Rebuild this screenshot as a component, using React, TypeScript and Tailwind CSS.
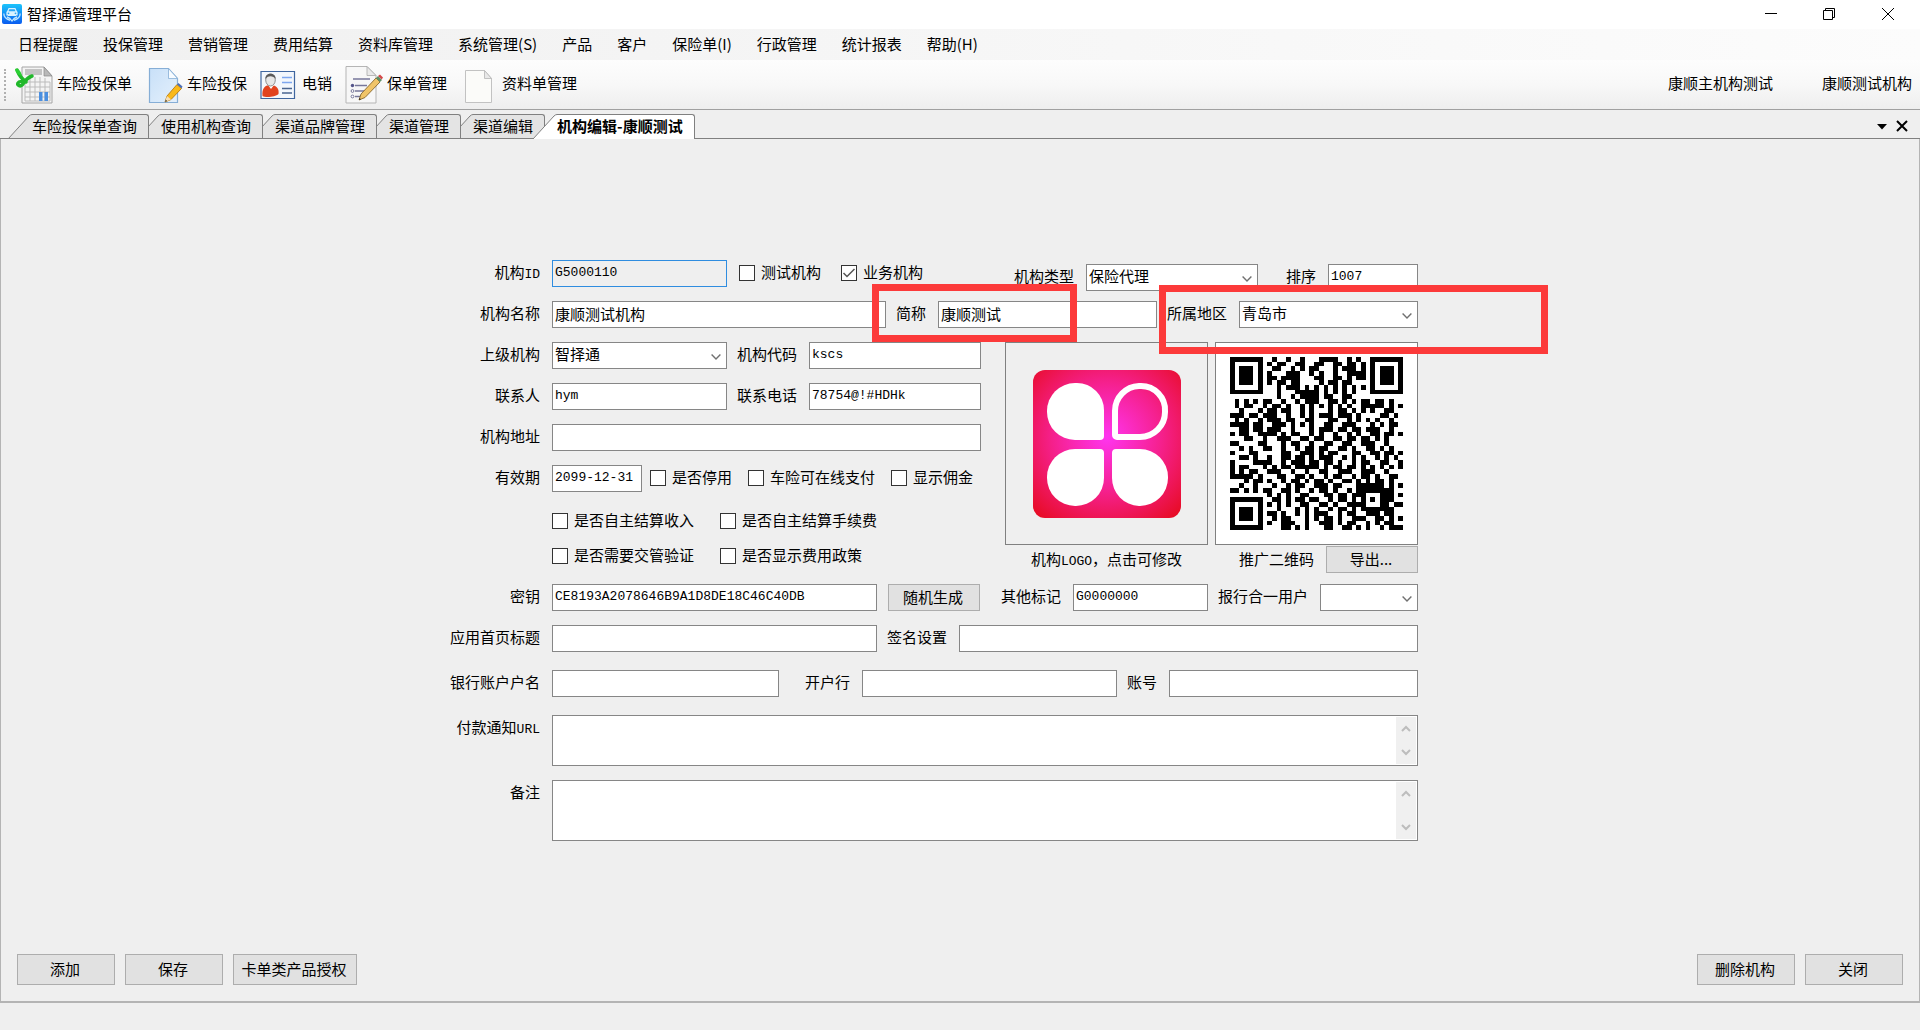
import { useId, useState } from 'react';
import type { ReactNode } from 'react';
import { clsx } from 'clsx';

const MENU = [
  '日程提醒',
  '投保管理',
  '营销管理',
  '费用结算',
  '资料库管理',
  '系统管理(S)',
  '产品',
  '客户',
  '保险单(I)',
  '行政管理',
  '统计报表',
  '帮助(H)',
];

const TABS = [
  '车险投保单查询',
  '使用机构查询',
  '渠道品牌管理',
  '渠道管理',
  '渠道编辑',
  '机构编辑-康顺测试',
];

// earlier tabs overlap the slanted edge of the next one
const TAB_LAYERS = ['z-[5]', 'z-[4]', 'z-[3]', 'z-[2]', 'z-[1]', 'z-[6]'];

const QR_ROWS = [
  '1111111..1..1..1...1111..1.1..1111111',
  '1000001.1.11..11..11..11.11.1.1000001',
  '1011101..11..1.1.11...1.111.1.1011101',
  '1011101.1...111..1.1..1..1111.1011101',
  '1011101.11.1111...11..11.1.11.1011101',
  '1011101.1.11.11....1.11.11....1011101',
  '1000001...1.111.1.1.1.1.1.1.1.1000001',
  '1111111...1...11111.1.1.1.1...1111111',
  '..........1..1.1111.11..11...........',
  '.1.1.1.11..1..1.111..11.1.1.11.11.1..',
  '.1.11..1.11.1..1.1.1.1.1.1..11111.1.1',
  '..1...1.11.11..1.1...1.11.1.1.1..11..',
  '111.11.111..1..1.1.111.111.1....11.1.',
  '.1.1..1.111.11..11...11..1.1.1.1..1..',
  '1111.11..111.1.1.1..11..111...1.1.11.',
  '..11.11.111..1...1.111.11.11.111..1..',
  '1.11..1111.1.11..1.1..1..1.1..11.11.1',
  '...11..1..111..11.11..11.11.11.1.1...',
  '11....11...1.11..1..11..11..111..1...',
  '..1.1..11..1..1.11.11..11.1..11.1.1..',
  '1...11.....11..111.1.11...11..11.11.1',
  '..11.1..1..11.11.1.111..1.1.1..1.1.1.',
  '1....1111..1.111.11.11.1..1.11..11..1',
  '1.11...1.1.11.11111.1.11.11.1.1.1.1.1',
  '1.1.11..111..1..1..11..111..111..1...',
  '11111.1...11..11.1..1.11..1.11.1..11.',
  '...1.11.1..1.11.1.11.1..11.1.1.11.1..',
  '..1..1...1..1.11..111.11...111111.1.1',
  '11.1.1.11..11.1..1.11.1..1.11111111..',
  '........1.1.1..11...11.11.111...111.1',
  '1111111..11.1.11.11..1.11.1.1.1.111..',
  '1000001.1.1.1..11..11.1..1111...11.11',
  '1011101...1...1.1.1..1.11.1.1111111..',
  '1011101.11.1..1.1.111..1.11..111.11..',
  '1011101..1.11...1.1.11.1..111..11.1.1',
  '1000001.1..111..1..111.1.11..1.1.11..',
  '1111111....11.1.1...11..11.1.1..1.111',
];

const field =
  'h-[27px] min-w-0 border border-[#868686] bg-white pb-[3px] pl-[2px] text-black outline-none focus:border-[#0078d7]';
const cjkText = 'text-[15px]';
const monoText = "font-['Liberation_Mono','Noto_Sans_CJK_SC',monospace] text-[13px]";

function Latin({ children }: { children: ReactNode }) {
  return <span className="font-['Liberation_Mono',monospace] text-[13px]">{children}</span>;
}

interface LabelProps {
  htmlFor: string;
  className?: string;
  children: ReactNode;
}

function Label({ htmlFor, className, children }: LabelProps) {
  return (
    <label
      htmlFor={htmlFor}
      className={clsx('mr-3 h-[23px] shrink-0 whitespace-nowrap leading-[23px]', className)}
    >
      {children}
    </label>
  );
}

interface TextFieldProps {
  id: string;
  value?: string;
  mono?: boolean;
  readOnly?: boolean;
  className?: string;
}

function TextField({ id, value = '', mono, readOnly, className }: TextFieldProps) {
  return (
    <input
      id={id}
      type="text"
      defaultValue={value}
      readOnly={readOnly}
      className={clsx(
        field,
        mono ? monoText : cjkText,
        readOnly && 'border-[#2f8de0]! bg-[#efefef]!',
        className
      )}
    />
  );
}

function SelectField({ id, value = '', className }: TextFieldProps) {
  return (
    <div className={clsx('relative', className)}>
      <select id={id} defaultValue={value} className={clsx(field, cjkText, 'w-full appearance-none')}>
        <option value={value}>{value}</option>
      </select>
      <svg
        viewBox="0 0 10 6"
        className="pointer-events-none absolute top-[12px] right-[6px] h-[6px] w-[10px]"
        fill="none"
        stroke="#707070"
        strokeWidth="1.4"
      >
        <path d="M.6.6 5 5 9.4.6" />
      </svg>
    </div>
  );
}

interface CheckProps {
  label: string;
  checked?: boolean;
  className?: string;
}

function Check({ label, checked, className }: CheckProps) {
  return (
    <label className={clsx('flex h-[25px] shrink-0 items-center gap-1.5 whitespace-nowrap', className)}>
      <span className="relative size-4">
        <input
          type="checkbox"
          defaultChecked={checked}
          className="peer block size-4 appearance-none border border-[#333] bg-white"
        />
        <svg
          viewBox="0 0 16 16"
          className="pointer-events-none absolute inset-0 hidden size-4 peer-checked:block"
          fill="none"
          stroke="#555"
          strokeWidth="1.5"
        >
          <path d="M2.5 8 6 11.5 13.5 4" />
        </svg>
      </span>
      <span className="pb-px">{label}</span>
    </label>
  );
}

function PushButton({ className, children }: { className?: string; children: ReactNode }) {
  return (
    <button
      type="button"
      className={clsx(
        'shrink-0 border border-[#adadad] bg-[#e1e1e1] pr-0.5 pb-0.5 whitespace-nowrap hover:border-[#0078d7] hover:bg-[#e5f1fb]',
        className
      )}
    >
      {children}
    </button>
  );
}

function MemoField({ id, label, className }: { id: string; label: ReactNode; className: string }) {
  return (
    <div className="flex">
      <Label htmlFor={id} className="w-[90px] text-right">
        {label}
      </Label>
      <div className={clsx('flex min-w-0 flex-1 border border-[#868686] bg-white p-px', className)}>
        <textarea id={id} className="min-w-0 flex-1 resize-none outline-none" />
        <div className="flex w-5 flex-col items-center justify-between bg-[#f0f0f0] py-2">
          <svg viewBox="0 0 10 8" className="h-2 w-2.5" fill="none" stroke="#bdbdbd" strokeWidth="2">
            <path d="M1 6 5 2l4 4" />
          </svg>
          <svg viewBox="0 0 10 8" className="h-2 w-2.5" fill="none" stroke="#bdbdbd" strokeWidth="2">
            <path d="m1 2 4 4 4-4" />
          </svg>
        </div>
      </div>
    </div>
  );
}

function AppIcon() {
  return (
    <svg viewBox="0 0 20 20" className="size-5">
      <defs>
        <linearGradient id="app-bg" x1="0" y1="0" x2="0" y2="1">
          <stop offset="0" stopColor="#1cc4fb" />
          <stop offset="1" stopColor="#0a5cf0" />
        </linearGradient>
      </defs>
      <rect width="20" height="20" rx="2" fill="url(#app-bg)" />
      <path d="M6.6 4h6.8l1.4 3 .8 1v3.6H14V12H6v-.4H4.400V8l.8-1z" fill="#d8f2ff" />
      <path d="M7.300 5.200h5.400l.8 2H6.500z" fill="#2aa6f5" />
      <circle cx="6.500" cy="9.300" r=".9" fill="#2aa6f5" />
      <circle cx="13.500" cy="9.300" r=".9" fill="#2aa6f5" />
      <path
        d="M1.800 9.500c0 4 2.600 5.600 6.200 6.900M18.200 9.500c0 4-2.600 5.600-6.200 6.900M5 13c2 .4 3.500 1.500 5 4 1.500-2.500 3-3.600 5-4"
        fill="none"
        stroke="#bfe6ff"
        strokeWidth="1.300"
      />
    </svg>
  );
}

function SheetIcon() {
  return (
    <svg viewBox="0 0 40 40" className="size-10">
      <path d="M9 2h22l8 9v27H9z" fill="#f4f4f4" stroke="#a5a5a5" />
      <path d="M12 4h17v6H12z" fill="#c4c4c4" />
      <path d="M31 2v9h8z" fill="#b9b9b9" stroke="#8a8a8a" strokeWidth=".7" />
      <path
        d="M12 17h25M12 22h25M12 27h25M12 32h25M12 36h25M12 17v19M17 13v23M22 12v24M27 12v24M32 13v23M37 17v19"
        stroke="#bcbcbc"
        strokeWidth="1"
        fill="none"
      />
      <path d="M26 27h3.500v9H26zM31.500 27H35v9h-3.500z" fill="#4b8fe0" />
      <path
        d="M4 5c2 5 5 9 9 12M13 17c-3-1-7-1-8 1s2 4 4 2 4-7 10-9"
        fill="none"
        stroke="#20b82a"
        strokeWidth="3.500"
        strokeLinecap="round"
      />
      <path d="M2 4c3-1 6 2 7 7-4-1-6-3-7-7z" fill="#2bd034" />
    </svg>
  );
}

function EditPageIcon() {
  return (
    <svg viewBox="0 0 40 40" className="size-10">
      <defs>
        <linearGradient id="page-blue" x1="0" y1="0" x2="1" y2="1">
          <stop offset="0" stopColor="#c8e0f8" />
          <stop offset="1" stopColor="#e4f0fc" />
        </linearGradient>
      </defs>
      <path d="M6.500 3.500h19l9 10v24h-28z" fill="url(#page-blue)" stroke="#86aed6" strokeWidth="1.200" />
      <path d="M25.500 3.500v10h9z" fill="#f6fbff" stroke="#86aed6" strokeWidth=".8" />
      <path d="m24 31 10-11.500 4.500 4L28 34.500l-6 2.500z" fill="#f9b91a" stroke="#b97b0e" strokeWidth=".9" />
      <path d="m34 19.500 1.500-1.500 4 3.500-1 2z" fill="#4c6fb8" />
      <path d="m24 31 4 3.500-6 2.500z" fill="#f6dfb8" />
      <path d="m22.800 34.800 1.400 1.300-2.200.9z" fill="#333" />
    </svg>
  );
}

function ContactIcon() {
  return (
    <svg viewBox="0 0 40 40" className="size-10">
      <path d="M3 6.500h33.500v27H3z" fill="#f3f7fc" stroke="#3f669f" strokeWidth="1.200" />
      <path d="M4.500 31c-1-8 3-11 8-11s9 3 8 9c-3 3-13 4-16 2z" fill="#e2431f" />
      <path d="m10 20 3 4 3-4z" fill="#fff" />
      <ellipse cx="12.500" cy="15" rx="4.800" ry="6" fill="#e6e6e6" stroke="#777" strokeWidth=".8" />
      <path d="M7.500 14c-1-7 11-7 10 0-2-3-7-4-10 0z" fill="#5a5a5a" />
      <path d="M24 12.500h10M24 17.500h10" stroke="#7ea6ee" strokeWidth="1.300" />
      <path d="M24 23.500h10M24 28h10" stroke="#4a6590" strokeWidth="1.300" />
    </svg>
  );
}

function PolicyIcon() {
  return (
    <svg viewBox="0 0 40 40" className="size-10">
      <path d="M3 1.500h21l9 9V38H3z" fill="#f7f7f7" stroke="#b5b5b5" />
      <path d="M24 1.500v9h9z" fill="#e9e9e9" stroke="#a9a9a9" strokeWidth=".8" />
      <path d="M10 14h17M12 20.500h12M12 26h10M12 31.500h7" stroke="#77779a" strokeWidth="1.500" />
      <circle cx="9.500" cy="20.500" r="1.700" fill="#55558a" />
      <circle cx="9.500" cy="26" r="1.400" fill="#fff" stroke="#77779a" />
      <circle cx="9.500" cy="31.500" r="1.400" fill="#fff" stroke="#77779a" />
      <path d="m18 29 15-16 4 4-15 15.500-6 2.500z" fill="#f0c468" stroke="#87672b" strokeWidth=".9" />
      <path d="m33 13 2-2 4 4-2 2z" fill="#5d9068" />
      <path d="m35 11 2-1.500 3 3-1.300 2z" fill="#d44848" />
      <path d="m16.500 33 1.500 1.300-2 .7z" fill="#222" />
    </svg>
  );
}

function BlankPageIcon() {
  return (
    <svg viewBox="0 0 40 40" className="size-10">
      <path d="M7.500 5.500h19l7 8v24h-26z" fill="#fbfbf9" stroke="#c2c2c2" />
      <path d="M26.500 5.500v8h7z" fill="#e8e8e8" stroke="#b5b5b5" strokeWidth=".8" />
    </svg>
  );
}

function OrgLogo() {
  return (
    <svg viewBox="0 0 148 148" className="size-[148px]" role="img" aria-label="机构LOGO">
      <defs>
        <radialGradient id="logo-bg" cx=".5" cy=".45" r=".74">
          <stop offset="0" stopColor="#ff35f0" />
          <stop offset=".5" stopColor="#f5208c" />
          <stop offset="1" stopColor="#e60a1c" />
        </radialGradient>
      </defs>
      <rect width="148" height="148" rx="12" fill="url(#logo-bg)" />
      <g fill="#fff">
        <path d="M42 13h2a27 27 0 0 1 27 27v26a4 4 0 0 1-4 4H42a28 28 0 0 1-28-28v-1a28 28 0 0 1 28-28z" />
        <path d="M42 79h25a4 4 0 0 1 4 4v25a28 28 0 0 1-28 28h-1a28 28 0 0 1-28-28v-1a28 28 0 0 1 28-28z" />
        <path d="M83 79h24a28 28 0 0 1 28 28v1a28 28 0 0 1-28 28h-1a28 28 0 0 1-27-28V83a4 4 0 0 1 4-4z" />
      </g>
      <path
        d="M106 16h2a24 24 0 0 1 24 25v1a25 25 0 0 1-25 25H84a2 2 0 0 1-2-2V41a25 25 0 0 1 24-25z"
        fill="none"
        stroke="#fff"
        strokeWidth="6"
      />
    </svg>
  );
}

function QrCode() {
  const path = QR_ROWS.map((row, y) =>
    [...row].map((c, x) => (c === '1' ? `M${x} ${y}h1v1h-1z` : '')).join('')
  ).join('');
  return (
    <svg
      viewBox="0 0 37 37"
      className="size-[173px]"
      role="img"
      aria-label="推广二维码"
      shapeRendering="crispEdges"
    >
      <path d={path} fill="#000" />
    </svg>
  );
}

function TitleBar() {
  return (
    <header className="flex h-[29px] items-center bg-white pr-0.5 pb-px pl-0.5">
      <AppIcon />
      <h1 className="ml-[5px] text-[15px]">智择通管理平台</h1>
      <div className="ml-auto flex h-full">
        <button type="button" aria-label="最小化" className="grid w-[58px] place-items-center">
          <svg viewBox="0 0 12 12" className="size-3" stroke="#000">
            <path d="M0 5.500h12" />
          </svg>
        </button>
        <button type="button" aria-label="还原" className="grid w-[58px] place-items-center">
          <svg viewBox="0 0 12 12" className="size-3" fill="none" stroke="#000">
            <path d="M.5 2.500h9v9h-9zM2.500 2.500v-2h9v9h-2" />
          </svg>
        </button>
        <button type="button" aria-label="关闭窗口" className="grid w-[60px] place-items-center">
          <svg viewBox="0 0 12 12" className="size-3" stroke="#000">
            <path d="m0 0 12 12M12 0 0 12" />
          </svg>
        </button>
      </div>
    </header>
  );
}

function Toolbar() {
  const tools = [
    { label: '车险投保单', icon: <SheetIcon /> },
    { label: '车险投保', icon: <EditPageIcon /> },
    { label: '电销', icon: <ContactIcon /> },
    { label: '保单管理', icon: <PolicyIcon /> },
    { label: '资料单管理', icon: <BlankPageIcon /> },
  ];
  return (
    <div className="flex h-[50px] items-center border-b border-[#a0a0a0] bg-linear-to-b from-[#fdfdfd] via-[#f8f8f8] to-[#eeeeee] pr-2 pl-1">
      <div className="h-8 w-0 border-l-2 border-dotted border-[#b0b0b0]" />
      <div className="ml-[7px] flex gap-[11px]">
        {tools.map((tool) => (
          <button key={tool.label} type="button" className="flex items-center gap-1">
            {tool.icon}
            <span className="pb-1">{tool.label}</span>
          </button>
        ))}
      </div>
      <div className="ml-auto flex gap-[49px] pb-1">
        <span>康顺主机构测试</span>
        <span>康顺测试机构</span>
      </div>
    </div>
  );
}

function TabStrip() {
  const [active, setActive] = useState(TABS.length - 1);
  return (
    <div className="flex h-[29px] items-end border-b border-[#808080] bg-[#efefef] pl-5">
      <div role="tablist" className="isolate flex">
        {TABS.map((tab, i) => {
          const on = i === active;
          return (
            <button
              key={tab}
              type="button"
              role="tab"
              aria-selected={on}
              onClick={() => setActive(i)}
              className={clsx('relative h-6 px-3', TAB_LAYERS[i], on && 'font-bold')}
            >
              <span
                className={clsx(
                  'absolute top-0 right-0 left-3 rounded-tr-[3px] border-t border-r border-[#808080]',
                  on ? '-bottom-px bg-white' : 'bottom-0 bg-[#e4e4e4]'
                )}
              />
              <svg viewBox="0 0 24 25" className="absolute top-0 -left-3 h-[25px] w-6">
                <path
                  d="M0 25 21 2q1.500-1.500 3-1.500V25z"
                  fill={on ? '#fff' : '#e4e4e4'}
                />
                <path d="M0 25 21 2q1.500-1.500 3-1.500" fill="none" stroke="#808080" />
                {!on && <path d="M0 24.500h24" stroke="#808080" />}
              </svg>
              <span className="relative block h-6 leading-[23px]">{tab}</span>
            </button>
          );
        })}
      </div>
      <div className="ml-auto flex items-center gap-2 self-center pt-1 pr-3">
        <button type="button" aria-label="标签列表">
          <svg viewBox="0 0 12 12" className="size-3">
            <path d="M1 4h10L6 9.500z" />
          </svg>
        </button>
        <button type="button" aria-label="关闭标签">
          <svg viewBox="0 0 12 12" className="size-3" stroke="#000" strokeWidth="2">
            <path d="m1 1 10 10M11 1 1 11" />
          </svg>
        </button>
      </div>
    </div>
  );
}

function OrgForm() {
  const uid = useId();
  const id = (name: string) => `${uid}-${name}`;
  const lead = 'w-[90px] text-right';

  return (
    <form className="relative w-full max-w-[968px]">
      <div className="mb-2.5 flex items-start">
        <Label htmlFor={id('orgId')} className={lead}>
          机构<Latin>ID</Latin>
        </Label>
        <TextField id={id('orgId')} value="G5000110" mono readOnly className="w-[175px]" />
        <Check label="测试机构" className="ml-3" />
        <Check label="业务机构" checked className="ml-5" />
        <div className="ml-auto flex pt-1">
          <Label htmlFor={id('type')}>机构类型</Label>
          <SelectField id={id('type')} value="保险代理" className="w-[172px]" />
          <Label htmlFor={id('order')} className="ml-7">
            排序
          </Label>
          <TextField id={id('order')} value="1007" mono className="w-[90px]" />
        </div>
      </div>

      <div className="mb-3.5 flex">
        <Label htmlFor={id('name')} className={lead}>
          机构名称
        </Label>
        <TextField id={id('name')} value="康顺测试机构" className="flex-1" />
        <Label htmlFor={id('short')} className="ml-2.5">
          简称
        </Label>
        <TextField id={id('short')} value="康顺测试" className="w-[219px]" />
        <Label htmlFor={id('area')} className="ml-2.5">
          所属地区
        </Label>
        <SelectField id={id('area')} value="青岛市" className="w-[179px]" />
      </div>

      <div className="flex justify-between">
        <div className="w-[531px]">
          <div className="flex flex-col gap-3.5">
            <div className="flex">
              <Label htmlFor={id('parent')} className={lead}>
                上级机构
              </Label>
              <SelectField id={id('parent')} value="智择通" className="w-[175px]" />
              <Label htmlFor={id('code')} className="ml-2.5">
                机构代码
              </Label>
              <TextField id={id('code')} value="kscs" mono className="flex-1" />
            </div>
            <div className="flex">
              <Label htmlFor={id('contact')} className={lead}>
                联系人
              </Label>
              <TextField id={id('contact')} value="hym" mono className="w-[175px]" />
              <Label htmlFor={id('phone')} className="ml-2.5">
                联系电话
              </Label>
              <TextField id={id('phone')} value="78754@!#HDHk" mono className="flex-1" />
            </div>
            <div className="flex">
              <Label htmlFor={id('address')} className={lead}>
                机构地址
              </Label>
              <TextField id={id('address')} className="flex-1" />
            </div>
            <div className="flex">
              <Label htmlFor={id('valid')} className={lead}>
                有效期
              </Label>
              <TextField id={id('valid')} value="2099-12-31" mono className="w-[90px]" />
              <Check label="是否停用" className="ml-2" />
              <Check label="车险可在线支付" className="ml-4" />
              <Check label="显示佣金" className="ml-4" />
            </div>
          </div>
          <div className="mt-4 flex flex-col gap-2.5 pl-[102px]">
            <div className="flex gap-[26px]">
              <Check label="是否自主结算收入" />
              <Check label="是否自主结算手续费" />
            </div>
            <div className="flex gap-[26px]">
              <Check label="是否需要交管验证" />
              <Check label="是否显示费用政策" />
            </div>
          </div>
        </div>

        <div className="flex gap-[7px]">
          <div className="w-[203px]">
            <button
              type="button"
              className="grid h-[203px] w-full place-items-center border border-[#808080]"
            >
              <OrgLogo />
            </button>
            <p className="text-center leading-[27px]">
              机构<Latin>LOGO</Latin>，点击可修改
            </p>
          </div>
          <div className="w-[203px]">
            <div className="grid h-[203px] place-items-center border border-[#808080] bg-white">
              <QrCode />
            </div>
            <div className="mt-px flex items-center justify-end gap-3">
              <span className="pb-0.5">推广二维码</span>
              <PushButton className="h-[27px] w-[92px]">导出...</PushButton>
            </div>
          </div>
        </div>
      </div>

      <div className="mt-[9px] flex">
        <Label htmlFor={id('key')} className={lead}>
          密钥
        </Label>
        <TextField
          id={id('key')}
          value="CE8193A2078646B9A1D8DE18C46C40DB"
          mono
          className="w-[325px]"
        />
        <PushButton className="ml-[11px] h-[27px] w-[92px]">随机生成</PushButton>
        <Label htmlFor={id('mark')} className="ml-auto">
          其他标记
        </Label>
        <TextField id={id('mark')} value="G0000000" mono className="w-[135px]" />
        <Label htmlFor={id('user')} className="ml-2.5">
          报行合一用户
        </Label>
        <SelectField id={id('user')} className="w-[98px]" />
      </div>

      <div className="mt-3.5 flex">
        <Label htmlFor={id('title')} className={lead}>
          应用首页标题
        </Label>
        <TextField id={id('title')} className="w-[325px]" />
        <Label htmlFor={id('sign')} className="ml-2.5">
          签名设置
        </Label>
        <TextField id={id('sign')} className="flex-1" />
      </div>

      <div className="my-[18px] flex">
        <Label htmlFor={id('holder')} className={lead}>
          银行账户户名
        </Label>
        <TextField id={id('holder')} className="w-[227px]" />
        <Label htmlFor={id('bank')} className="ml-[26px]">
          开户行
        </Label>
        <TextField id={id('bank')} className="w-[255px]" />
        <Label htmlFor={id('account')} className="ml-2.5">
          账号
        </Label>
        <TextField id={id('account')} className="flex-1" />
      </div>

      <div className="flex flex-col gap-3.5">
        <MemoField
          id={id('url')}
          label={
            <>
              付款通知<Latin>URL</Latin>
            </>
          }
          className="h-[51px]"
        />
        <MemoField id={id('remark')} label="备注" className="h-[61px]" />
      </div>

      {/* highlighted areas */}
      <div className="pointer-events-none absolute top-6 left-[422px] h-[58px] w-[205px] border-[7px] border-[#fc3a3a]" />
      <div className="pointer-events-none absolute top-[25px] left-[709px] h-[69px] w-[389px] border-[7px] border-[#fc3a3a]" />
    </form>
  );
}

export default function App() {
  return (
    <div className="flex min-h-screen flex-col bg-[#efefef] font-['Noto_Sans_CJK_SC',sans-serif] text-[15px] leading-[18px] text-black">
      <TitleBar />
      <nav className="flex h-[31px] items-center gap-[25px] bg-linear-to-r from-[#f0f0f0] to-[#fcfcfc] pb-0.5 pl-[18px]">
        {MENU.map((item) => (
          <button key={item} type="button">
            {item}
          </button>
        ))}
      </nav>
      <Toolbar />
      <TabStrip />
      <main className="flex flex-1 flex-col border-x border-b-2 border-[#b4b4b4] px-4 pt-[121px] pb-4">
        <div className="flex justify-center pr-[52px]">
          <OrgForm />
        </div>
        <div className="mt-auto flex gap-2.5">
          <PushButton className="h-[31px] w-[98px]">添加</PushButton>
          <PushButton className="h-[31px] w-[98px]">保存</PushButton>
          <PushButton className="h-[31px] w-[124px]">卡单类产品授权</PushButton>
          <PushButton className="ml-auto h-[31px] w-[98px]">删除机构</PushButton>
          <PushButton className="h-[31px] w-[98px]">关闭</PushButton>
        </div>
      </main>
      <footer className="h-[27px]" />
    </div>
  );
}
